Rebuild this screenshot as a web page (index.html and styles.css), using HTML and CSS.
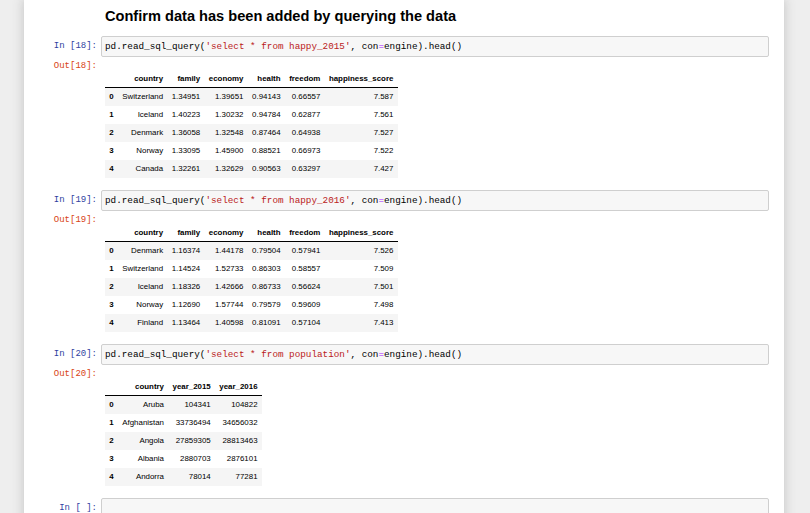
FILE: index.html
```html
<!DOCTYPE html>
<html>
<head>
<meta charset="utf-8">
<link rel="stylesheet" href="styles.css">
</head>
<body>
<div class="panel">
  <div class="md-cell">
    <h3 class="heading">Confirm data has been added by querying the data</h3>
  </div>

  <div class="cell">
    <div class="row">
      <div class="prompt in">In&nbsp;[18]:</div>
      <div class="input">pd.read_sql_query(<span class="s">'select * from happy_2015'</span>, con<span class="o">=</span>engine).head()</div>
    </div>
    <div class="row out-row">
      <div class="prompt out">Out[18]:</div>
      <div class="output">
        <table class="df">
          <thead>
            <tr><th></th><th>country</th><th>family</th><th>economy</th><th>health</th><th>freedom</th><th>happiness_score</th></tr>
          </thead>
          <tbody>
            <tr><th>0</th><td>Switzerland</td><td>1.34951</td><td>1.39651</td><td>0.94143</td><td>0.66557</td><td>7.587</td></tr>
            <tr><th>1</th><td>Iceland</td><td>1.40223</td><td>1.30232</td><td>0.94784</td><td>0.62877</td><td>7.561</td></tr>
            <tr><th>2</th><td>Denmark</td><td>1.36058</td><td>1.32548</td><td>0.87464</td><td>0.64938</td><td>7.527</td></tr>
            <tr><th>3</th><td>Norway</td><td>1.33095</td><td>1.45900</td><td>0.88521</td><td>0.66973</td><td>7.522</td></tr>
            <tr><th>4</th><td>Canada</td><td>1.32261</td><td>1.32629</td><td>0.90563</td><td>0.63297</td><td>7.427</td></tr>
          </tbody>
        </table>
      </div>
    </div>
  </div>

  <div class="cell">
    <div class="row">
      <div class="prompt in">In&nbsp;[19]:</div>
      <div class="input">pd.read_sql_query(<span class="s">'select * from happy_2016'</span>, con<span class="o">=</span>engine).head()</div>
    </div>
    <div class="row out-row">
      <div class="prompt out">Out[19]:</div>
      <div class="output">
        <table class="df">
          <thead>
            <tr><th></th><th>country</th><th>family</th><th>economy</th><th>health</th><th>freedom</th><th>happiness_score</th></tr>
          </thead>
          <tbody>
            <tr><th>0</th><td>Denmark</td><td>1.16374</td><td>1.44178</td><td>0.79504</td><td>0.57941</td><td>7.526</td></tr>
            <tr><th>1</th><td>Switzerland</td><td>1.14524</td><td>1.52733</td><td>0.86303</td><td>0.58557</td><td>7.509</td></tr>
            <tr><th>2</th><td>Iceland</td><td>1.18326</td><td>1.42666</td><td>0.86733</td><td>0.56624</td><td>7.501</td></tr>
            <tr><th>3</th><td>Norway</td><td>1.12690</td><td>1.57744</td><td>0.79579</td><td>0.59609</td><td>7.498</td></tr>
            <tr><th>4</th><td>Finland</td><td>1.13464</td><td>1.40598</td><td>0.81091</td><td>0.57104</td><td>7.413</td></tr>
          </tbody>
        </table>
      </div>
    </div>
  </div>

  <div class="cell">
    <div class="row">
      <div class="prompt in">In&nbsp;[20]:</div>
      <div class="input">pd.read_sql_query(<span class="s">'select * from population'</span>, con<span class="o">=</span>engine).head()</div>
    </div>
    <div class="row out-row">
      <div class="prompt out">Out[20]:</div>
      <div class="output">
        <table class="df">
          <thead>
            <tr><th></th><th>country</th><th>year_2015</th><th>year_2016</th></tr>
          </thead>
          <tbody>
            <tr><th>0</th><td>Aruba</td><td>104341</td><td>104822</td></tr>
            <tr><th>1</th><td>Afghanistan</td><td>33736494</td><td>34656032</td></tr>
            <tr><th>2</th><td>Angola</td><td>27859305</td><td>28813463</td></tr>
            <tr><th>3</th><td>Albania</td><td>2880703</td><td>2876101</td></tr>
            <tr><th>4</th><td>Andorra</td><td>78014</td><td>77281</td></tr>
          </tbody>
        </table>
      </div>
    </div>
  </div>

  <div class="cell">
    <div class="row">
      <div class="prompt in">In&nbsp;[&nbsp;]:</div>
      <div class="input empty"></div>
    </div>
  </div>
</div>
</body>
</html>
```

FILE: styles.css
```css
html, body {
  margin: 0;
  padding: 0;
  height: 513px;
  overflow: hidden;
  background: #eeeeee;
}

.panel {
  margin-left: 24px;
  width: 760px;
  min-height: 600px;
  background: #ffffff;
  box-shadow: 0 0 10px 1px rgba(87, 87, 87, 0.25);
  padding: 7px 15px 0 0;
  box-sizing: border-box;
}

.md-cell {
  padding-left: 81px;
  margin-bottom: 11px;
}

.heading {
  margin: 0;
  font-family: "Liberation Sans", Arial, sans-serif;
  font-weight: bold;
  font-size: 14.6px;
  line-height: 18px;
  color: #000;
}

.cell {
  margin-bottom: 12px;
}

.row {
  display: flex;
  align-items: flex-start;
}

.prompt {
  width: 77px;
  flex: none;
  box-sizing: border-box;
  padding-right: 4px;
  text-align: right;
  font-family: "Liberation Mono", "Courier New", monospace;
  font-size: 9px;
  line-height: 13px;
  white-space: nowrap;
}

.prompt.in {
  color: #303f9f;
  padding-top: 4px;
}

.prompt.out {
  color: #d84315;
  padding-top: 3px;
}

.input {
  flex: 1;
  height: 21px;
  box-sizing: border-box;
  border: 1px solid #cfcfcf;
  border-radius: 2px;
  background: #f7f7f7;
  padding: 3px 3px;
  font-family: "Liberation Mono", "Courier New", monospace;
  font-size: 9.3px;
  line-height: 13px;
  color: #000;
  white-space: pre;
}

.input .s {
  color: #ba2121;
}

.input .o {
  color: #aa22ff;
}

.output {
  flex: 1;
  padding-left: 4px;
  padding-top: 13px;
}

.df {
  border-collapse: collapse;
  border-spacing: 0;
  font-family: "Liberation Sans", Arial, sans-serif;
  font-size: 7.9px;
  color: #000;
}

.df th,
.df td {
  text-align: right;
  vertical-align: middle;
  padding: 4px 4.3px;
  line-height: 10px;
  white-space: nowrap;
}

.df th {
  font-weight: bold;
}

.df thead tr {
  border-bottom: 1px solid #000;
}

.df thead th {
  padding-bottom: 3px;
}

.df tbody tr:nth-child(odd) {
  background: #f5f5f5;
}
```
